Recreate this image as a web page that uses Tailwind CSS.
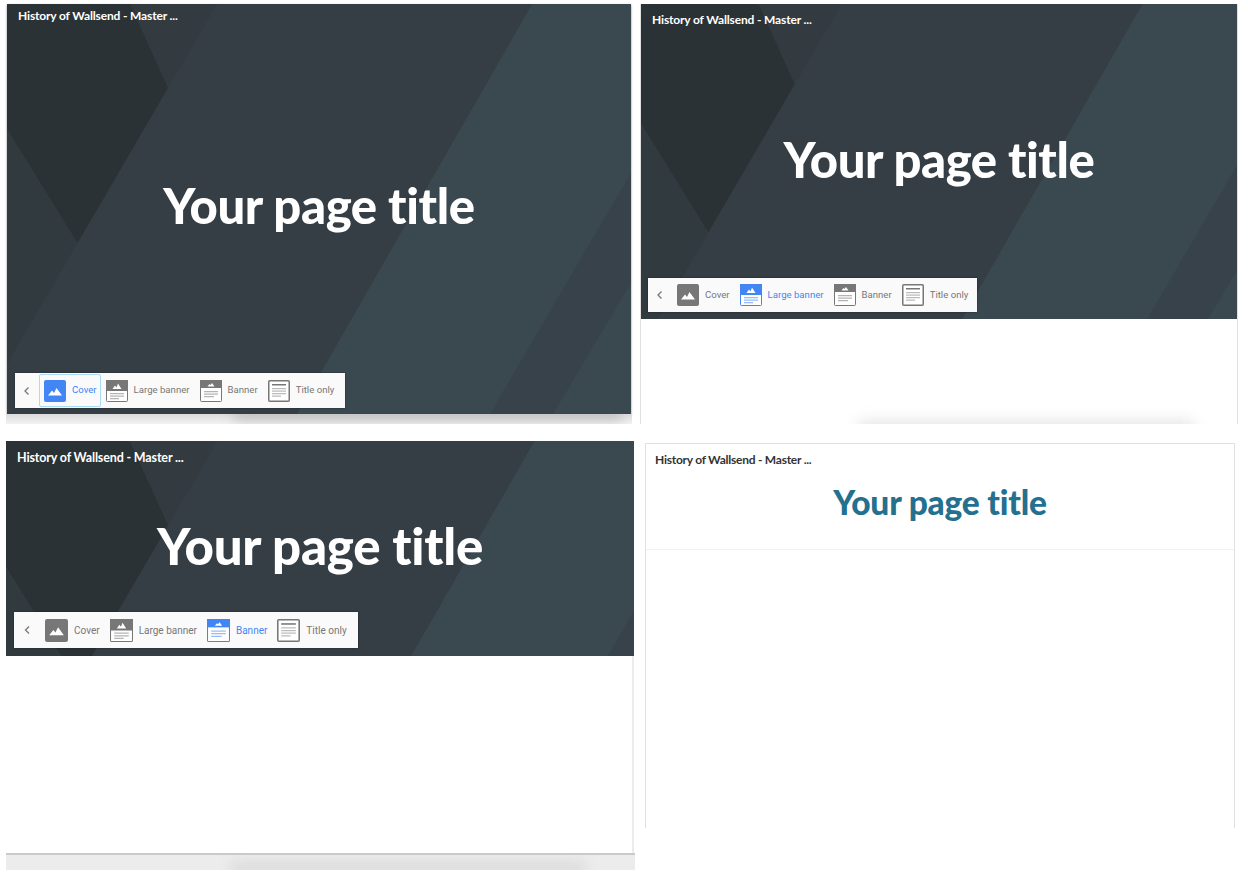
<!DOCTYPE html>
<html lang="en">
<head>
    <meta charset="UTF-8">
    <title>Page header styles</title>
    <script src="https://cdn.jsdelivr.net/npm/@tailwindcss/browser@4"></script>
</head>
<body class="bg-white font-['Roboto',sans-serif] w-[1248px] h-[872px] overflow-hidden">
    <!-- shared icons and header artwork -->
    <svg class="hidden">
        <symbol id="i-cover" viewBox="0 0 22 22">
            <rect width="22" height="22" rx="2" fill="currentColor"/>
            <path d="M4 15.500 8 10.500 10 13 12.500 8 18 15.500Z" fill="#fff"/>
        </symbol>
        <symbol id="i-large" viewBox="0 0 22 22">
            <rect x=".5" y=".5" width="21" height="21" rx="1" fill="#fff" stroke="currentColor"/>
            <rect width="22" height="11" fill="currentColor"/>
            <path d="M6.500 9 9 5.500 10.500 7.500 12 3.500 15.500 9Z" fill="#fff"/>
            <path d="M4 13h14v1.200H4zM4 15.500h14v1.200H4zM4 18h9v1.200H4z" fill="currentColor" opacity=".55"/>
        </symbol>
        <symbol id="i-banner" viewBox="0 0 22 22">
            <rect x=".5" y=".5" width="21" height="21" rx="1" fill="#fff" stroke="currentColor"/>
            <rect width="22" height="8" fill="currentColor"/>
            <path d="M7.500 6.500 9.500 4 10.500 5 12 3 14.500 6.500Z" fill="#fff"/>
            <path d="M4 11h14v1.200H4zM4 13.500h14v1.200H4zM4 16h10v1.200H4z" fill="currentColor" opacity=".55"/>
        </symbol>
        <symbol id="i-title" viewBox="0 0 22 22">
            <rect x=".75" y=".75" width="20.500" height="20.500" rx="1" fill="#fff" stroke="currentColor" stroke-width="1.500"/>
            <path d="M4 4h14v1.500H4z" fill="currentColor"/>
            <path d="M4 8h14v1.200H4zM4 10.500h14v1.200H4zM4 13h14v1.200H4zM4 15.500h9v1.200H4z" fill="currentColor" opacity=".5"/>
        </symbol>
        <defs>
            <g id="bg">
                <rect width="624" height="410" fill="#333b41"/>
                <path d="M0 0H123L161 84 71 240 0 125Z" fill="#2b3236"/>
                <path d="M0 125 71 240 0 360Z" fill="#313a3f"/>
                <path d="M210 0H525L290 410H0V360Z" fill="#353e44"/>
                <path d="M525 0H624V410H290Z" fill="#3a4850"/>
                <path d="M624 169 483 410H546L624 279Z" fill="#38424a"/>
            </g>
        </defs>
    </svg>

    <div class="flex items-start pt-[4px] h-[441px]">
        <!-- Cover -->
        <section class="ml-[7px] w-[624px]">
            <div class="relative h-[410px] overflow-hidden shadow-[0_1px_2px_rgba(0,0,0,.5)]">
                <svg class="absolute top-0 left-0 w-full h-auto" viewBox="0 0 624 410"><use href="#bg"/></svg>
                <div class="relative h-full flex flex-col px-[11px]">
                    <p class="pt-[4px] font-['Lato',sans-serif] font-bold text-[12px] tracking-[-0.15px] leading-[16px] text-white">History of Wallsend - Master ...</p>
                    <div class="flex-1 flex items-center justify-center pt-[14px]">
                        <h1 class="font-['Lato',sans-serif] font-black [font-variant-ligatures:none] text-[49px] tracking-[-0.35px] leading-none text-white">Your page title</h1>
                    </div>
                    <div class="mb-[6px] -ml-[3px] self-start h-[35px] w-[330px] flex items-center whitespace-nowrap bg-[#fafafa] shadow-[0_0_2px_rgba(0,0,0,.4)] text-[9.600px] text-[#777]">
                        <svg class="w-[24px] h-[12px] shrink-0 text-[#777]" viewBox="0 0 24 12"><path d="M13.500 2.500 10 6l3.500 3.500" fill="none" stroke="currentColor" stroke-width="1.300"/></svg>
                        <div class="flex items-center gap-[6px] h-[33px] pl-[4px] pr-[3px] border border-[#a8dcf5] rounded-[2px] text-[#4285f4]"><svg class="w-[22px] h-[22px]"><use href="#i-cover"/></svg>Cover</div>
                        <div class="flex items-center gap-[6px] px-[5px]"><svg class="w-[22px] h-[22px]"><use href="#i-large"/></svg>Large banner</div>
                        <div class="flex items-center gap-[6px] px-[5px]"><svg class="w-[22px] h-[22px]"><use href="#i-banner"/></svg>Banner</div>
                        <div class="flex items-center gap-[6px] px-[5px]"><svg class="w-[22px] h-[22px]"><use href="#i-title"/></svg>Title only</div>
                    </div>
                </div>
            </div>
            <div class="relative h-[10px] -mx-[1px] overflow-hidden bg-gradient-to-b from-[#dcdcdc] to-[#f2f2f2]">
                <div class="absolute left-[228px] right-[10px] top-[-6px] h-[12px] bg-[#c0c0c0] blur-[6px]"></div>
            </div>
        </section>

        <!-- Large banner -->
        <section class="ml-[9px] w-[598px] h-[420px] border-x border-[#e0e0e0] relative overflow-hidden">
            <div class="relative h-[315px] overflow-hidden">
                <svg class="absolute top-0 left-0 w-full h-auto" viewBox="0 0 624 410"><use href="#bg"/></svg>
                <div class="relative h-full flex flex-col px-[11px]">
                    <p class="pt-[8px] font-['Lato',sans-serif] font-bold text-[12px] tracking-[-0.15px] leading-[16px] text-white">History of Wallsend - Master ...</p>
                    <div class="flex-1 flex items-center justify-center pt-[12px]">
                        <h1 class="font-['Lato',sans-serif] font-black [font-variant-ligatures:none] text-[49px] tracking-[-0.4px] leading-none text-white">Your page title</h1>
                    </div>
                    <div class="mb-[7px] -ml-[4px] self-start h-[34px] w-[329px] flex items-center whitespace-nowrap bg-[#fafafa] shadow-[0_0_2px_rgba(0,0,0,.4)] text-[9.600px] text-[#777]">
                        <svg class="w-[24px] h-[12px] shrink-0 text-[#777]" viewBox="0 0 24 12"><path d="M13.500 2.500 10 6l3.500 3.500" fill="none" stroke="currentColor" stroke-width="1.300"/></svg>
                        <div class="flex items-center gap-[6px] px-[5px]"><svg class="w-[22px] h-[22px]"><use href="#i-cover"/></svg>Cover</div>
                        <div class="flex items-center gap-[6px] px-[5px] text-[#4285f4]"><svg class="w-[22px] h-[22px]"><use href="#i-large"/></svg>Large banner</div>
                        <div class="flex items-center gap-[6px] px-[5px]"><svg class="w-[22px] h-[22px]"><use href="#i-banner"/></svg>Banner</div>
                        <div class="flex items-center gap-[6px] px-[5px]"><svg class="w-[22px] h-[22px]"><use href="#i-title"/></svg>Title only</div>
                    </div>
                </div>
            </div>
            <div class="absolute left-[218px] bottom-[-14px] w-[335px] h-[16px] bg-[#e0e0e0] blur-[8px]"></div>
        </section>
    </div>

    <div class="flex items-start">
        <!-- Banner -->
        <section class="ml-[6px] w-[628px]">
            <div class="relative h-[215px] overflow-hidden">
                <svg class="absolute top-0 left-0 w-full h-auto" viewBox="0 0 624 410"><use href="#bg"/></svg>
                <div class="relative h-full flex flex-col px-[11px]">
                    <p class="pt-[9px] font-['Lato',sans-serif] font-bold text-[12.500px] tracking-[-0.15px] leading-[16px] text-white">History of Wallsend - Master ...</p>
                    <div class="flex-1 flex items-center justify-center pt-[12px]">
                        <h1 class="font-['Lato',sans-serif] font-black [font-variant-ligatures:none] text-[51px] tracking-[-0.25px] leading-none text-white">Your page title</h1>
                    </div>
                    <div class="mb-[8px] -ml-[3px] self-start h-[36px] w-[344px] flex items-center whitespace-nowrap bg-[#fafafa] shadow-[0_0_2px_rgba(0,0,0,.4)] text-[10px] text-[#777]">
                        <svg class="w-[26px] h-[12px] shrink-0 text-[#777]" viewBox="0 0 26 12"><path d="M15 2.500 11.500 6l3.500 3.500" fill="none" stroke="currentColor" stroke-width="1.300"/></svg>
                        <div class="flex items-center gap-[6px] px-[5px]"><svg class="w-[23px] h-[23px]"><use href="#i-cover"/></svg>Cover</div>
                        <div class="flex items-center gap-[6px] px-[5px]"><svg class="w-[23px] h-[23px]"><use href="#i-large"/></svg>Large banner</div>
                        <div class="flex items-center gap-[6px] px-[5px] text-[#4285f4]"><svg class="w-[23px] h-[23px]"><use href="#i-banner"/></svg>Banner</div>
                        <div class="flex items-center gap-[6px] px-[5px]"><svg class="w-[23px] h-[23px]"><use href="#i-title"/></svg>Title only</div>
                    </div>
                </div>
            </div>
            <div class="h-[197px] bg-white border-r-2 border-[#ececec]"></div>
            <div class="relative h-[17px] -mr-[1px] bg-[#ececec] border-t-2 border-[#cacaca] overflow-hidden">
                <div class="absolute left-[225px] right-[50px] top-[6px] h-[14px] bg-[#dcdcdc] blur-[6px]"></div>
            </div>
        </section>

        <!-- Title only -->
        <section class="ml-[11px] mt-[2px] w-[590px] h-[385px] border-x border-t border-[#e0e0e0]">
            <div class="h-[106px] border-b border-[#f2f2f2] flex flex-col px-[9px]">
                <p class="pt-[8px] font-['Lato',sans-serif] font-bold text-[12px] tracking-[-0.25px] leading-[16px] text-[#333]">History of Wallsend - Master ...</p>
                <div class="flex-1 flex items-center justify-center pb-[12px]">
                    <h1 class="font-['Lato',sans-serif] font-black [font-variant-ligatures:none] text-[33.500px] tracking-[-0.2px] leading-none text-[#24708f]">Your page title</h1>
                </div>
            </div>
        </section>
    </div>
</body>
</html>
